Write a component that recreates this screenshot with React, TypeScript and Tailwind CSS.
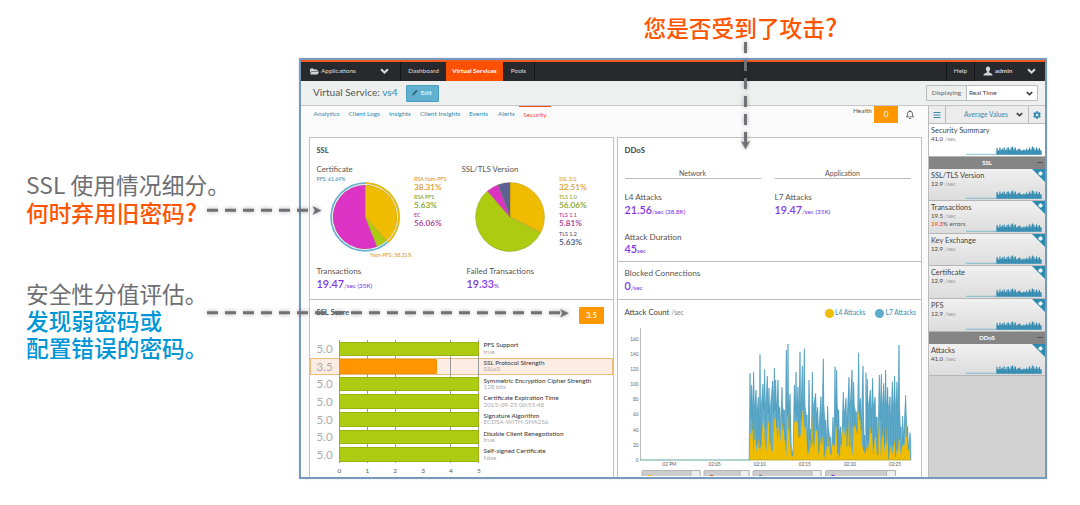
import React from 'react';
import { FaFolderOpen, FaPencilAlt, FaCog, FaBars, FaRegBell } from 'react-icons/fa';

interface ScoreRow {
  score: number;
  label: string;
  value: string;
}

interface Metric {
  title: string;
  rate: string;
  errors?: string;
  plain?: boolean;
}

interface Slice {
  value: number;
  color: string;
}

const TABS = [
  { name: 'Analytics', width: 'w-[35px]' },
  { name: 'Client Logs', width: 'w-[40.5px]' },
  { name: 'Insights', width: 'w-[31px]' },
  { name: 'Client Insights', width: 'w-[49px]' },
  { name: 'Events', width: 'w-[29px]' },
  { name: 'Alerts', width: 'w-[21px]' },
];

const SCORES: ScoreRow[] = [
  { score: 5, label: 'PFS Support', value: 'true' },
  { score: 3.5, label: 'SSL Protocol Strength', value: 'SSLv3' },
  { score: 5, label: 'Symmetric Encryption Cipher Strength', value: '128 bits' },
  { score: 5, label: 'Certificate Expiration Time', value: '2015-09-25 00:55:48' },
  { score: 5, label: 'Signature Algorithm', value: 'ECDSA-WITH-SHA256' },
  { score: 5, label: 'Disable Client Renegotiation', value: 'true' },
  { score: 5, label: 'Self-signed Certificate', value: 'false' },
];

const SSL_METRICS: Metric[] = [
  { title: 'SSL/TLS Version', rate: '12.9' },
  { title: 'Transactions', rate: '19.5', errors: '19.3' },
  { title: 'Key Exchange', rate: '12.9' },
  { title: 'Certificate', rate: '12.9' },
  { title: 'PFS', rate: '12.9' },
];

const CERT_SLICES: Slice[] = [
  { value: 38.31, color: '#f0bc00' },
  { value: 5.63, color: '#adcb10' },
  { value: 56.06, color: '#dd33c4' },
];

const TLS_SLICES: Slice[] = [
  { value: 32.51, color: '#f0bc00' },
  { value: 56.06, color: '#adcb10' },
  { value: 5.81, color: '#dd33c4' },
  { value: 5.63, color: '#5d6294' },
];

// [x, peak, dip after the peak], in thirds of a pixel from the chart's top
const L7: number[][] = [
  [30, 130, 265], [35, 165, 300], [41, 126, 330], [48, 180, 345], [55, 202, 355], [60, 73, 350],
  [69, 162, 240], [74, 118, 290], [82, 138, 250], [87, 174, 340], [98, 153, 250], [103, 114, 240],
  [107, 150, 290], [114, 150, 270], [119, 232, 290], [126, 172, 300], [133, 240, 330], [139, 60, 260],
  [144, 42, 300], [150, 192, 340], [156, 360, 378], [163, 165, 250], [168, 126, 260], [174, 170, 320],
  [180, 65, 270], [187, 108, 240], [193, 56, 290], [201, 255, 370], [207, 150, 330], [211, 297, 350],
  [217, 126, 340], [227, 190, 300], [233, 232, 370], [243, 200, 340], [250, 86, 380], [257, 270, 350],
  [263, 228, 350], [271, 320, 375], [279, 262, 345], [285, 110, 290], [290, 120, 370], [296, 240, 380],
  [302, 290, 345], [310, 186, 290], [318, 205, 350], [327, 142, 350], [336, 120, 290], [341, 156, 290],
  [349, 245, 310], [356, 68, 270], [361, 205, 300], [369, 108, 360], [374, 315, 370], [378, 128, 330],
  [382, 148, 340], [391, 180, 310], [398, 145, 350], [405, 202, 320], [411, 260, 375], [418, 135, 270],
  [424, 133, 320], [431, 160, 350], [437, 120, 340], [443, 172, 388], [450, 200, 345], [457, 155, 350],
  [464, 138, 380], [471, 155, 360], [477, 45, 330], [483, 290, 350], [488, 258, 340], [497, 196, 320],
  [503, 290, 360], [510, 308, 330],
];

const L4: number[][] = [
  [28, 390], [31, 308], [34, 315], [37, 266], [40, 382], [44, 288], [49, 365], [54, 335], [58, 320],
  [62, 362], [67, 290], [71, 266], [75, 340], [79, 365], [83, 285], [88, 270], [93, 362], [98, 365],
  [103, 264], [108, 268], [112, 338], [116, 288], [121, 338], [125, 272], [130, 290], [135, 340],
  [139, 380], [144, 238], [148, 310], [154, 378], [158, 380], [163, 276], [168, 272], [174, 280],
  [178, 330], [183, 310], [188, 238], [193, 300], [196, 262], [201, 345], [206, 372], [211, 350],
  [216, 245], [221, 366], [227, 300], [233, 306], [238, 370], [244, 312], [250, 330], [254, 384],
  [261, 350], [265, 318], [271, 376], [278, 340], [284, 350], [289, 282], [294, 382], [302, 345],
  [309, 290], [315, 320], [320, 290], [324, 352], [328, 238], [333, 352], [338, 378], [342, 276],
  [350, 305], [356, 240], [361, 270], [366, 345], [373, 370], [379, 350], [384, 365], [391, 290],
  [396, 310], [399, 376], [405, 318], [411, 378], [417, 265], [423, 388], [428, 290], [434, 370],
  [440, 285], [446, 382], [452, 350], [458, 372], [464, 330], [470, 374], [477, 320], [482, 376],
  [488, 345], [494, 346], [498, 272], [504, 362], [508, 340], [511, 390],
];

const SPARK = [6.5, 4, 7, 5, 6, 7, 4.5, 6.5, 7, 5, 7, 8, 6, 7, 4, 5.5, 6, 4, 3.5, 5, 4, 6, 4.5, 7, 5.5, 8, 7, 5, 7, 5, 6.5, 4];

function Chevron({ className }: { className?: string }) {
  return (
    <svg viewBox="0 0 9 6" className={className} fill="none" stroke="currentColor" strokeWidth="2.2">
      <path d="M1 1.2 4.5 4.5 8 1.2" />
    </svg>
  );
}

function Pie({ slices, radius }: { slices: Slice[]; radius: number }) {
  let total = 0;
  const point = (percent: number) => {
    const angle = (percent / 100) * Math.PI * 2;
    return `${35 + radius * Math.sin(angle)} ${35 - radius * Math.cos(angle)}`;
  };
  return (
    <>
      {slices.map((slice) => {
        const start = total;
        total = Math.min(total + slice.value, 99.999);
        const large = slice.value > 50 ? 1 : 0;
        return (
          <path
            key={slice.color}
            d={`M35 35 L${point(start)} A${radius} ${radius} 0 ${large} 1 ${point(total)} Z`}
            fill={slice.color}
            stroke="#77752c"
            strokeOpacity="0.5"
            strokeWidth="0.5"
          />
        );
      })}
    </>
  );
}

function Share({ label, value, color }: { label: string; value: string; color: string }) {
  return (
    <div className={`h-[18.4px] whitespace-nowrap ${color}`}>
      <div className="text-[5.4px] leading-[7px] font-medium">{label}</div>
      <div className="text-[8.2px] leading-[9.5px] font-semibold">{value}</div>
    </div>
  );
}

function Stat({ title, value, unit }: { title: string; value: string; unit: string }) {
  return (
    <div className="whitespace-nowrap">
      <div className="text-[8.2px] leading-[9.5px] text-[#555]">{title}</div>
      <div className="text-[10.8px] leading-[14px] font-semibold text-[#8338e8]">
        {value}
        <span className="text-[6.3px] font-medium">{unit}</span>
      </div>
    </div>
  );
}

function Sparkline() {
  return (
    <svg className="h-[9px] w-[76px]" viewBox="0 0 76 9">
      <path d="M0 8.3H76" stroke="#5aa9c8" strokeWidth="0.7" />
      {SPARK.map((h, i) => (
        <rect key={i} x={30.5 + i * 1.41} y={8.5 - h} width="1.2" height={h} fill="#338bb0" />
      ))}
      <rect x="30.5" y="4.3" width="45" height="4.2" fill="#338bb0" opacity="0.75" />
    </svg>
  );
}

function MetricCard({ title, rate, errors, plain }: Metric) {
  return (
    <div
      className={`relative h-[32.6px] border-b border-[#b5b5b5] pl-[2px] pt-[2px] ${
        plain ? 'bg-white' : 'bg-linear-to-b from-[#f0f0f0] to-[#dcdcdc]'
      }`}
    >
      <div className="text-[7.4px] leading-[9px] text-[#444]">{title}</div>
      <div className="text-[6.1px] leading-[8px] text-[#444]">
        {rate} <span className="text-[#999]">/sec</span>
      </div>
      {errors && (
        <div className="text-[6.1px] leading-[8px] text-[#555]">
          <span className="font-semibold text-[#f04a1c]">{errors}</span>% errors
        </div>
      )}
      <div className="absolute right-[3px] bottom-[1px] flex">
        <Sparkline />
      </div>
      {!plain && (
        <svg className="absolute top-0 right-0 size-[13px]" viewBox="0 0 13 13">
          <path d="M0 0H13V13Z" fill="#2e8bb0" />
          <path d="M8.500 2.400v4.200M6.400 4.500h4.200" stroke="#fff" strokeWidth="1.6" />
          <circle cx="8.5" cy="4.5" r="1.7" fill="#fff" />
        </svg>
      )}
    </div>
  );
}

function GroupBar({ name }: { name: string }) {
  return (
    <div className="relative h-[12px] bg-[#858585] text-center text-[6px] leading-[12px] font-bold text-white">
      {name}
      <span className="absolute top-[5.5px] right-[2px] h-px w-[6px] bg-[#555]" />
    </div>
  );
}

function TopNav() {
  return (
    <nav className="flex h-[19px] items-stretch bg-[#28292d] text-[6.4px] leading-[18px] font-medium text-[#d5d5d5]">
      <div className="flex w-[100px] items-center border-r border-[#131416] pb-px pl-[9px]">
        <FaFolderOpen className="mr-[2px] size-[9px]" />
        <span className="w-[59px]">Applications</span>
        <Chevron className="h-[6px] w-[9px]" />
      </div>
      <div className="w-[45px] text-center">Dashboard</div>
      <div className="w-[57px] bg-[#ff5000] text-center font-bold text-white">Virtual Services</div>
      <div className="w-[32px] border-r border-[#131416] text-center">Pools</div>
      <div className="ml-auto w-[29px] border-x border-[#131416] text-center">Help</div>
      <div className="flex w-[70px] items-center pb-px pl-[8px]">
        <svg className="mr-[2px] size-[10px]" viewBox="0 0 10 10" fill="currentColor">
          <path d="M5 .5C3.600 .5 2.900 1.500 2.900 2.900c0 1.200.5 2 1.100 2.500v.8C3.500 7 .4 7.100.4 9.500h9.200C9.600 7.100 6.500 7 6 6.200v-.8c.6-.5 1.100-1.300 1.100-2.500C7.100 1.500 6.400.5 5 .5Z" />
        </svg>
        <span className="w-[32px] font-bold">admin</span>
        <Chevron className="h-[6px] w-[9px]" />
      </div>
    </nav>
  );
}

function SslPanel() {
  return (
    <section className="h-[162px] border-b border-[#bbb] pt-[6.5px] pl-[6.5px]">
      <h2 className="text-[7.5px] leading-[11px] font-bold text-[#444]">SSL</h2>
      <div className="mt-[8px] flex">
        <div className="w-[145px]">
          <h3 className="text-[7.9px] leading-[10px] text-[#555]">Certificate</h3>
          <div className="mt-[2px] flex">
            <div className="w-[97.5px]">
              <div className="h-[6px] text-[5.2px] leading-[6px] font-medium text-[#4394b5]">PFS: 61.69%</div>
              <svg className="ml-[13px] size-[70px]" viewBox="0 0 70 70">
                <circle cx="35" cy="35" r="33.9" fill="none" stroke="#6ab4d2" strokeWidth="1.8" />
                <path d="M35 1.1A33.9 33.9 0 0 1 57.7 60.2" fill="none" stroke="#f0bc00" strokeWidth="1.8" />
                <Pie slices={CERT_SLICES} radius={32} />
              </svg>
            </div>
            <div>
              <Share label="RSA Non-PFS" value="38.31%" color="text-[#e09a28]" />
              <Share label="RSA PFS" value="5.63%" color="text-[#83a11c]" />
              <Share label="EC" value="56.06%" color="text-[#ab3093]" />
            </div>
          </div>
          <div className="pl-[54px] text-[5.3px] leading-[7px] font-medium text-[#e09a28]">Non-PFS: 38.31%</div>
        </div>
        <div>
          <h3 className="text-[7.9px] leading-[10px] text-[#555]">SSL/TLS Version</h3>
          <div className="mt-[2px] flex">
            <svg className="mt-[6px] mr-[14.5px] ml-[13px] size-[70px]" viewBox="0 0 70 70">
              <Pie slices={TLS_SLICES} radius={34.5} />
            </svg>
            <div>
              <Share label="SSL 3.0" value="32.51%" color="text-[#e09a28]" />
              <Share label="TLS 1.0" value="56.06%" color="text-[#83a11c]" />
              <Share label="TLS 1.1" value="5.81%" color="text-[#ab3093]" />
              <Share label="TLS 1.2" value="5.63%" color="text-[#4c5078]" />
            </div>
          </div>
        </div>
      </div>
      <div className="mt-[8.5px] flex">
        <div className="w-[150px]">
          <Stat title="Transactions" value="19.47" unit="/sec (35K)" />
        </div>
        <Stat title="Failed Transactions" value="19.33" unit="%" />
      </div>
    </section>
  );
}

function ScorePanel() {
  return (
    <section>
      <div className="flex h-[40px] justify-between pt-[7px] pr-[9px] pl-[6.5px]">
        <h2 className="text-[7.7px] leading-[10px] font-medium text-[#444]">SSL Score</h2>
        <span className="h-[17px] w-[25px] rounded-[1px] bg-[#ff9800] text-center text-[8px] leading-[17px] font-semibold text-white">
          3.5
        </span>
      </div>
      <div>
        {SCORES.map((row) => {
          const low = row.score < 5;
          return (
            <div
              key={row.label}
              className={`flex h-[17.65px] items-center border ${
                low ? 'border-[#eebc78] bg-[#fdece4]' : 'border-transparent'
              }`}
            >
              <span className="w-[28.3px] pl-[5.5px] text-[11.5px] leading-none text-[#aaa]">{row.score.toFixed(1)}</span>
              <div className="flex h-[17.65px] w-[140px] shrink-0 items-center bg-[repeating-linear-gradient(to_right,#999_0_0.8px,transparent_0.8px_27.86px)]">
                <div
                  className={`h-[14.5px] border ${low ? 'rounded-r-[1px] border-[#f09000] bg-[#ff9500]' : 'border-[#98b410] bg-[#adcb10]'}`}
                  style={{ width: `${(row.score / 5) * 100}%` }}
                />
              </div>
              <div className="pb-[1px] pl-[4.2px] whitespace-nowrap">
                <div className="text-[6.4px] leading-[7.5px] font-medium text-[#444]">{row.label}</div>
                <div className="text-[6.3px] leading-[6.5px] text-[#aaa]">{row.value}</div>
              </div>
            </div>
          );
        })}
      </div>
      <div className="ml-[15.5px] flex pt-[3.5px] text-center text-[6.5px] leading-[8px] text-[#555]">
        {[0, 1, 2, 3, 4, 5].map((n) => (
          <span key={n} className="w-[27.9px]">{n}</span>
        ))}
      </div>
    </section>
  );
}

function AttackChart() {
  const l7Points = L7.map(([x, peak, dip]) => `${x / 3},${peak / 3} ${(x + 2.5) / 3},${dip / 3}`).join(' ');
  // the filled area only sags a little between two samples
  const l7Area = L7.map(
    ([x, peak, dip]) => `${(x - 1) / 3},${peak / 3} ${(x + 1) / 3},${peak / 3} ${(x + 2.5) / 3},${Math.min(dip, Math.max(peak + 60, 225)) / 3}`,
  ).join(' ');
  const l4Points = L4.map(([x, y]) => `${x / 3},${y / 3}`).join(' ');
  return (
    <svg className="h-[150px] w-[303px]" viewBox="618 326 303 150" fontFamily="Lato, sans-serif">
      <path d="M640.5 328V460" stroke="#aaa" strokeWidth="0.8" />
      <path d="M640 460H749" stroke="#63a69a" strokeWidth="1" />
      {[0, 20, 40, 60, 80, 100, 120, 140, 160].map((n) => (
        <text key={n} x="638.5" y={461.8 - n * 0.757} textAnchor="end" fontSize="4.8" fill="#666">{n}</text>
      ))}
      <g transform="translate(740 330)">
        <polygon points={`9,130 ${l7Area} 171,130`} fill="#66afce" />
        <polygon points={`9,130 ${l4Points} 171,130`} fill="#f0bc00" />
        <polyline points={`9,130 ${l7Points} 171,130`} fill="none" stroke="#3d91b2" strokeOpacity="0.55" strokeWidth="0.7" />
        <path d="M9 130H171" stroke="#a9a42c" strokeWidth="0.8" />
      </g>
      {['02 PM', '02:05', '02:10', '02:15', '02:20', '02:25'].map((label, i) => (
        <text key={label} x={669.5 + i * 45.1} y="466.4" textAnchor="middle" fontSize="4.7" fill="#555">{label}</text>
      ))}
      {[
        [642, 58, '#f0bc00'],
        [704, 45, '#d8502c'],
        [753, 68, '#4394b5'],
        [825.5, 70, '#8338e8'],
      ].map(([x, w, dot]) => (
        <g key={x}>
          <rect x={x} y="470.5" width={w} height="8" rx="1" fill="#ccc" stroke="#aaa" strokeWidth="0.8" />
          <rect x={Number(x) + Number(w) - 9} y="470.5" width="9" height="8" fill="#eee" stroke="#aaa" strokeWidth="0.8" />
          <circle cx={Number(x) + 7.5} cy="476.5" r="1.8" fill={String(dot)} />
        </g>
      ))}
    </svg>
  );
}

function DdosColumn() {
  return (
    <div className="h-[341px] w-[305px] border border-[#c2c2c2] bg-white">
      <section className="h-[124px] border-b border-[#bbb] pt-[6.5px] pl-[6.500px]">
        <h2 className="text-[7.8px] leading-[11px] font-bold text-[#444]">DDoS</h2>
        <div className="mt-[12px] flex gap-[14px] text-center text-[7px] leading-[10px] text-[#555]">
          <div className="w-[136px] border-b border-[#bbb]">Network</div>
          <div className="w-[136px] border-b border-[#bbb]">Application</div>
        </div>
        <div className="mt-[14.5px] flex">
          <div className="w-[150px]">
            <Stat title="L4 Attacks" value="21.56" unit="/sec (38.8K)" />
          </div>
          <Stat title="L7 Attacks" value="19.47" unit="/sec (35K)" />
        </div>
        <div className="mt-[14px]">
          <Stat title="Attack Duration" value="45" unit="sec" />
        </div>
      </section>
      <section className="h-[38px] border-b border-[#bbb] pt-[7px] pl-[6.500px]">
        <Stat title="Blocked Connections" value="0" unit="/sec" />
      </section>
      <section>
        <div className="flex h-[26px] items-center pr-[5px] pl-[6.500px] text-[7.8px] text-[#444]">
          <h2>Attack Count <span className="text-[6.6px] text-[#888]">/sec</span></h2>
          <div className="ml-auto flex items-center gap-px text-[6.7px] text-[#3d8cab]">
            <span className="size-[9px] rounded-full bg-[#f0bc00]" />
            <span className="mr-[9px]">L4 Attacks</span>
            <span className="size-[9px] rounded-full bg-[#5fadcc]" />
            <span>L7 Attacks</span>
          </div>
        </div>
        <AttackChart />
      </section>
    </div>
  );
}

function Sidebar() {
  return (
    <aside className="w-[117px] shrink-0 border-l border-[#bbb] bg-[#d2d2d2]">
      <div className="flex h-[18px] items-stretch border-b border-[#bbb] bg-[#ececec] text-[#338bb0]">
        <div className="flex w-[17px] items-center justify-center border-r border-[#bbb]">
          <FaBars className="size-[8px]" />
        </div>
        <div className="flex w-[83px] items-center border-r border-[#bbb] pl-[18px] text-[6.6px]">
          <span className="w-[52px]">Average Values</span>
          <Chevron className="h-[5px] w-[7px] text-[#444]" />
        </div>
        <div className="flex flex-1 items-center justify-center">
          <FaCog className="size-[8px]" />
        </div>
      </div>
      <MetricCard title="Security Summary" rate="41.0" plain />
      <GroupBar name="SSL" />
      {SSL_METRICS.map((metric) => (
        <MetricCard key={metric.title} {...metric} />
      ))}
      <GroupBar name="DDoS" />
      <MetricCard title="Attacks" rate="41.0" />
    </aside>
  );
}

function Dashboard() {
  return (
    <div className="h-[421px] w-[748px] overflow-hidden border-2 border-[#7899bd] bg-[#fbfbfb] font-[Lato,sans-serif] shadow-[0_0_2px_#cfd9e6]">
      <div className="h-[2px] bg-[#f05a1e]" />
      <TopNav />
      <header className="flex h-[25px] items-center border-b border-[#c5c5c5] bg-[#eef0f0] pr-[7px] pl-[12px]">
        <h1 className="text-[10.1px] text-[#555]">
          Virtual Service: <span className="text-[#338bb0]">vs4</span>
        </h1>
        <button className="ml-[8px] flex h-[17px] w-[33px] items-center justify-center gap-[3px] rounded-[1px] border border-[#4a9fc2] bg-[#62b0d0] text-[6.4px] text-white">
          <FaPencilAlt className="size-[5.5px] text-[#285b70]" />
          Edit
        </button>
        <div className="ml-auto flex h-[16px] w-[112px] items-center rounded-[1px] border border-[#bbb] text-[6.5px] text-[#444]">
          <span className="w-[39px] text-center text-[#666]">Displaying</span>
          <div className="flex h-full flex-1 items-center justify-between border-l border-[#bbb] bg-white pr-[4px] pl-[2px]">
            Real Time
            <Chevron className="h-[5px] w-[7px]" />
          </div>
        </div>
      </header>
      <div className="flex h-[371px]">
        <main className="w-[627px] shrink-0">
          <div className="flex h-[31px] items-start pl-[12.5px] text-[6.5px] leading-[16px] text-[#338bb0]">
            {TABS.map((tab) => (
              <span key={tab.name} className={`${tab.width} whitespace-nowrap`}>{tab.name}</span>
            ))}
            <span className="w-[32px] border-t border-t-[#f04a1c] text-center leading-[15px] text-[#f04a1c]">Security</span>
            <span className="ml-auto pr-[2px] leading-[10px] text-[#555]">Health</span>
            <span className="h-[17px] w-[24px] bg-[#ff9800] text-center text-[8px] leading-[17px] text-white">0</span>
            <FaRegBell className="mt-[4px] mr-[13px] ml-[7px] h-[9px] w-[10px] text-[#555]" />
          </div>
          <div className="flex gap-[3px] pl-[8px]">
            <div className="h-[341px] w-[305px] border border-[#c2c2c2] bg-white">
              <SslPanel />
              <ScorePanel />
            </div>
            <DdosColumn />
          </div>
        </main>
        <Sidebar />
      </div>
    </div>
  );
}

// Dashed pointers laid over the page, from each note to its panel
function Pointers() {
  return (
    <svg className="pointer-events-none absolute inset-0 h-[505px] w-[1080px] drop-shadow-[0_0_2px_#0005]" viewBox="0 0 1080 505">
      <g stroke="#707174" strokeWidth="3" strokeDasharray="11 7" fill="none">
        <path d="M745.5 42V144" />
        <path d="M207 210.3H308" />
        <path d="M207 312.8H560" />
      </g>
      <g fill="#707174">
        <path d="M745.5 149.5 741 141 745.5 143 750 141Z" />
        <path d="M321.5 210.5 312.5 206 314.8 210.5 312.5 215Z" />
        <path d="M569 313.3 560 309 562.3 313.3 560 317.6Z" />
      </g>
    </svg>
  );
}

export default function App() {
  return (
    <div className="relative flex h-[505px] w-[1080px] overflow-hidden bg-white font-['Noto_Sans_CJK_SC',sans-serif] text-[22.7px] leading-[27.3px]">
      <div className="w-[299px] shrink-0 pt-[171px] pl-[26px] whitespace-nowrap">
        <p className="tracking-[0.1px] text-[#6d6e71]">SSL 使用情况细分。</p>
        <p className="font-medium text-[#ff5400]">何时弃用旧密码<span className="text-[25px]">?</span></p>
        <div className="mt-[53px]">
          <p className="text-[#6d6e71]">安全性分值评估。</p>
          <p className="font-medium text-[#0096d6]">发现弱密码或</p>
          <p className="font-medium text-[#0096d6]">配置错误的密码。</p>
        </div>
      </div>
      <div>
        <p className="h-[58px] pt-[13px] pl-[344.5px] font-medium text-[#ff5400]">您是否受到了攻击<span className="text-[25px]">?</span></p>
        <Dashboard />
      </div>
      <Pointers />
    </div>
  );
}
